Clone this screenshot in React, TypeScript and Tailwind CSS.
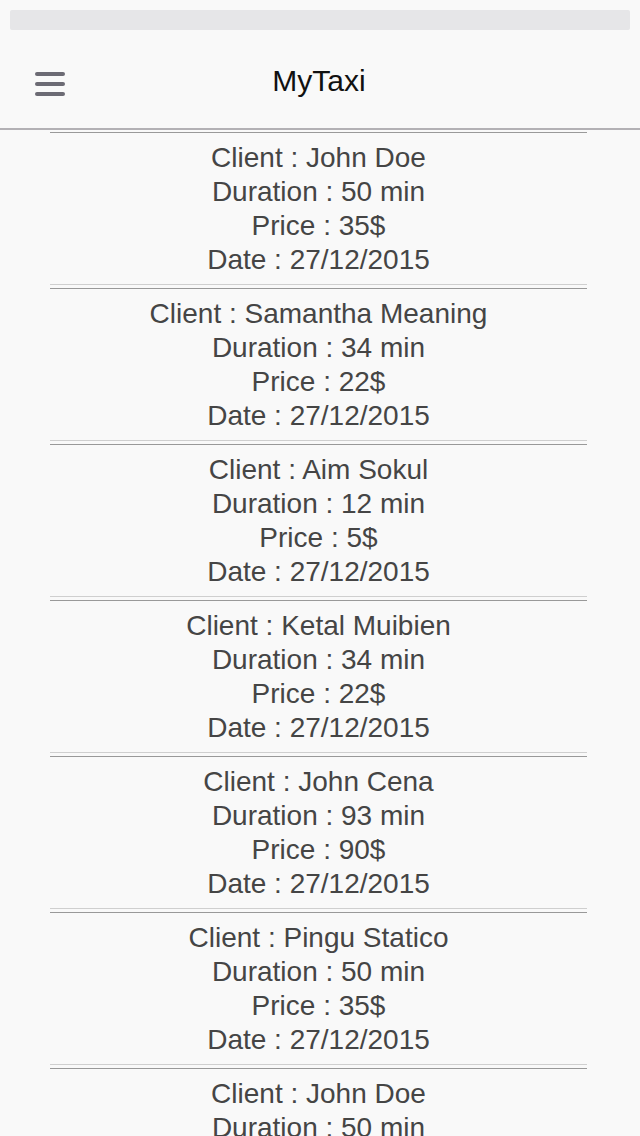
type Ride = {
    client: string;
    duration: number;
    price: number;
    date: string;
};

const rides: Ride[] = [
    { client: "John Doe", duration: 50, price: 35, date: "27/12/2015" },
    { client: "Samantha Meaning", duration: 34, price: 22, date: "27/12/2015" },
    { client: "Aim Sokul", duration: 12, price: 5, date: "27/12/2015" },
    { client: "Ketal Muibien", duration: 34, price: 22, date: "27/12/2015" },
    { client: "John Cena", duration: 93, price: 90, date: "27/12/2015" },
    { client: "Pingu Statico", duration: 50, price: 35, date: "27/12/2015" },
    { client: "John Doe", duration: 50, price: 35, date: "27/12/2015" },
];

function MenuIcon() {
    return (
        <div className="flex flex-col gap-[6px] w-[30px]">
            <span className="block h-[4px] rounded-full bg-[#6c6b74]" />
            <span className="block h-[4px] rounded-full bg-[#6c6b74]" />
            <span className="block h-[4px] rounded-full bg-[#6c6b74]" />
        </div>
    );
}

function Header() {
    return (
        <div className="relative flex items-center justify-center h-[100px] border-b-2 border-[#b3b1b5]">
            <button aria-label="menu" className="absolute left-[35px] top-[42px]">
                <MenuIcon />
            </button>
            <span className="text-[30px] leading-none text-[#111] mt-[4px] ml-[-2px]">MyTaxi</span>
        </div>
    );
}

function RideItem(props: { ride: Ride; first: boolean }) {
    const { ride } = props;
    return (
        <div>
            {props.first ? (
                <div className="mt-[2px] border-t border-[#9a9a9a]" />
            ) : (
                <div className="h-[5px] border-t border-b border-t-[#cfcfcf] border-b-[#999]" />
            )}
            <div className="pt-[8px] pb-[7px] text-center text-[28px] leading-[34px] text-[#454545]">
                <div>Client : {ride.client}</div>
                <div>Duration : {ride.duration} min</div>
                <div>Price : {ride.price}$</div>
                <div>Date : {ride.date}</div>
            </div>
        </div>
    );
}

export default function App() {
    return (
        <div
            className="h-[1136px] overflow-hidden bg-[#f9f9f9]"
            style={{ fontFamily: '"Liberation Sans", Arial, sans-serif' }}
        >
            <div className="px-[10px] pt-[10px]">
                <div className="h-[20px] rounded-[2px] bg-[#e6e6e8]" />
            </div>
            <Header />
            <div className="ml-[50px] w-[537px]">
                {rides.map((ride, i) => (
                    <RideItem key={i} ride={ride} first={i === 0} />
                ))}
            </div>
        </div>
    );
}
